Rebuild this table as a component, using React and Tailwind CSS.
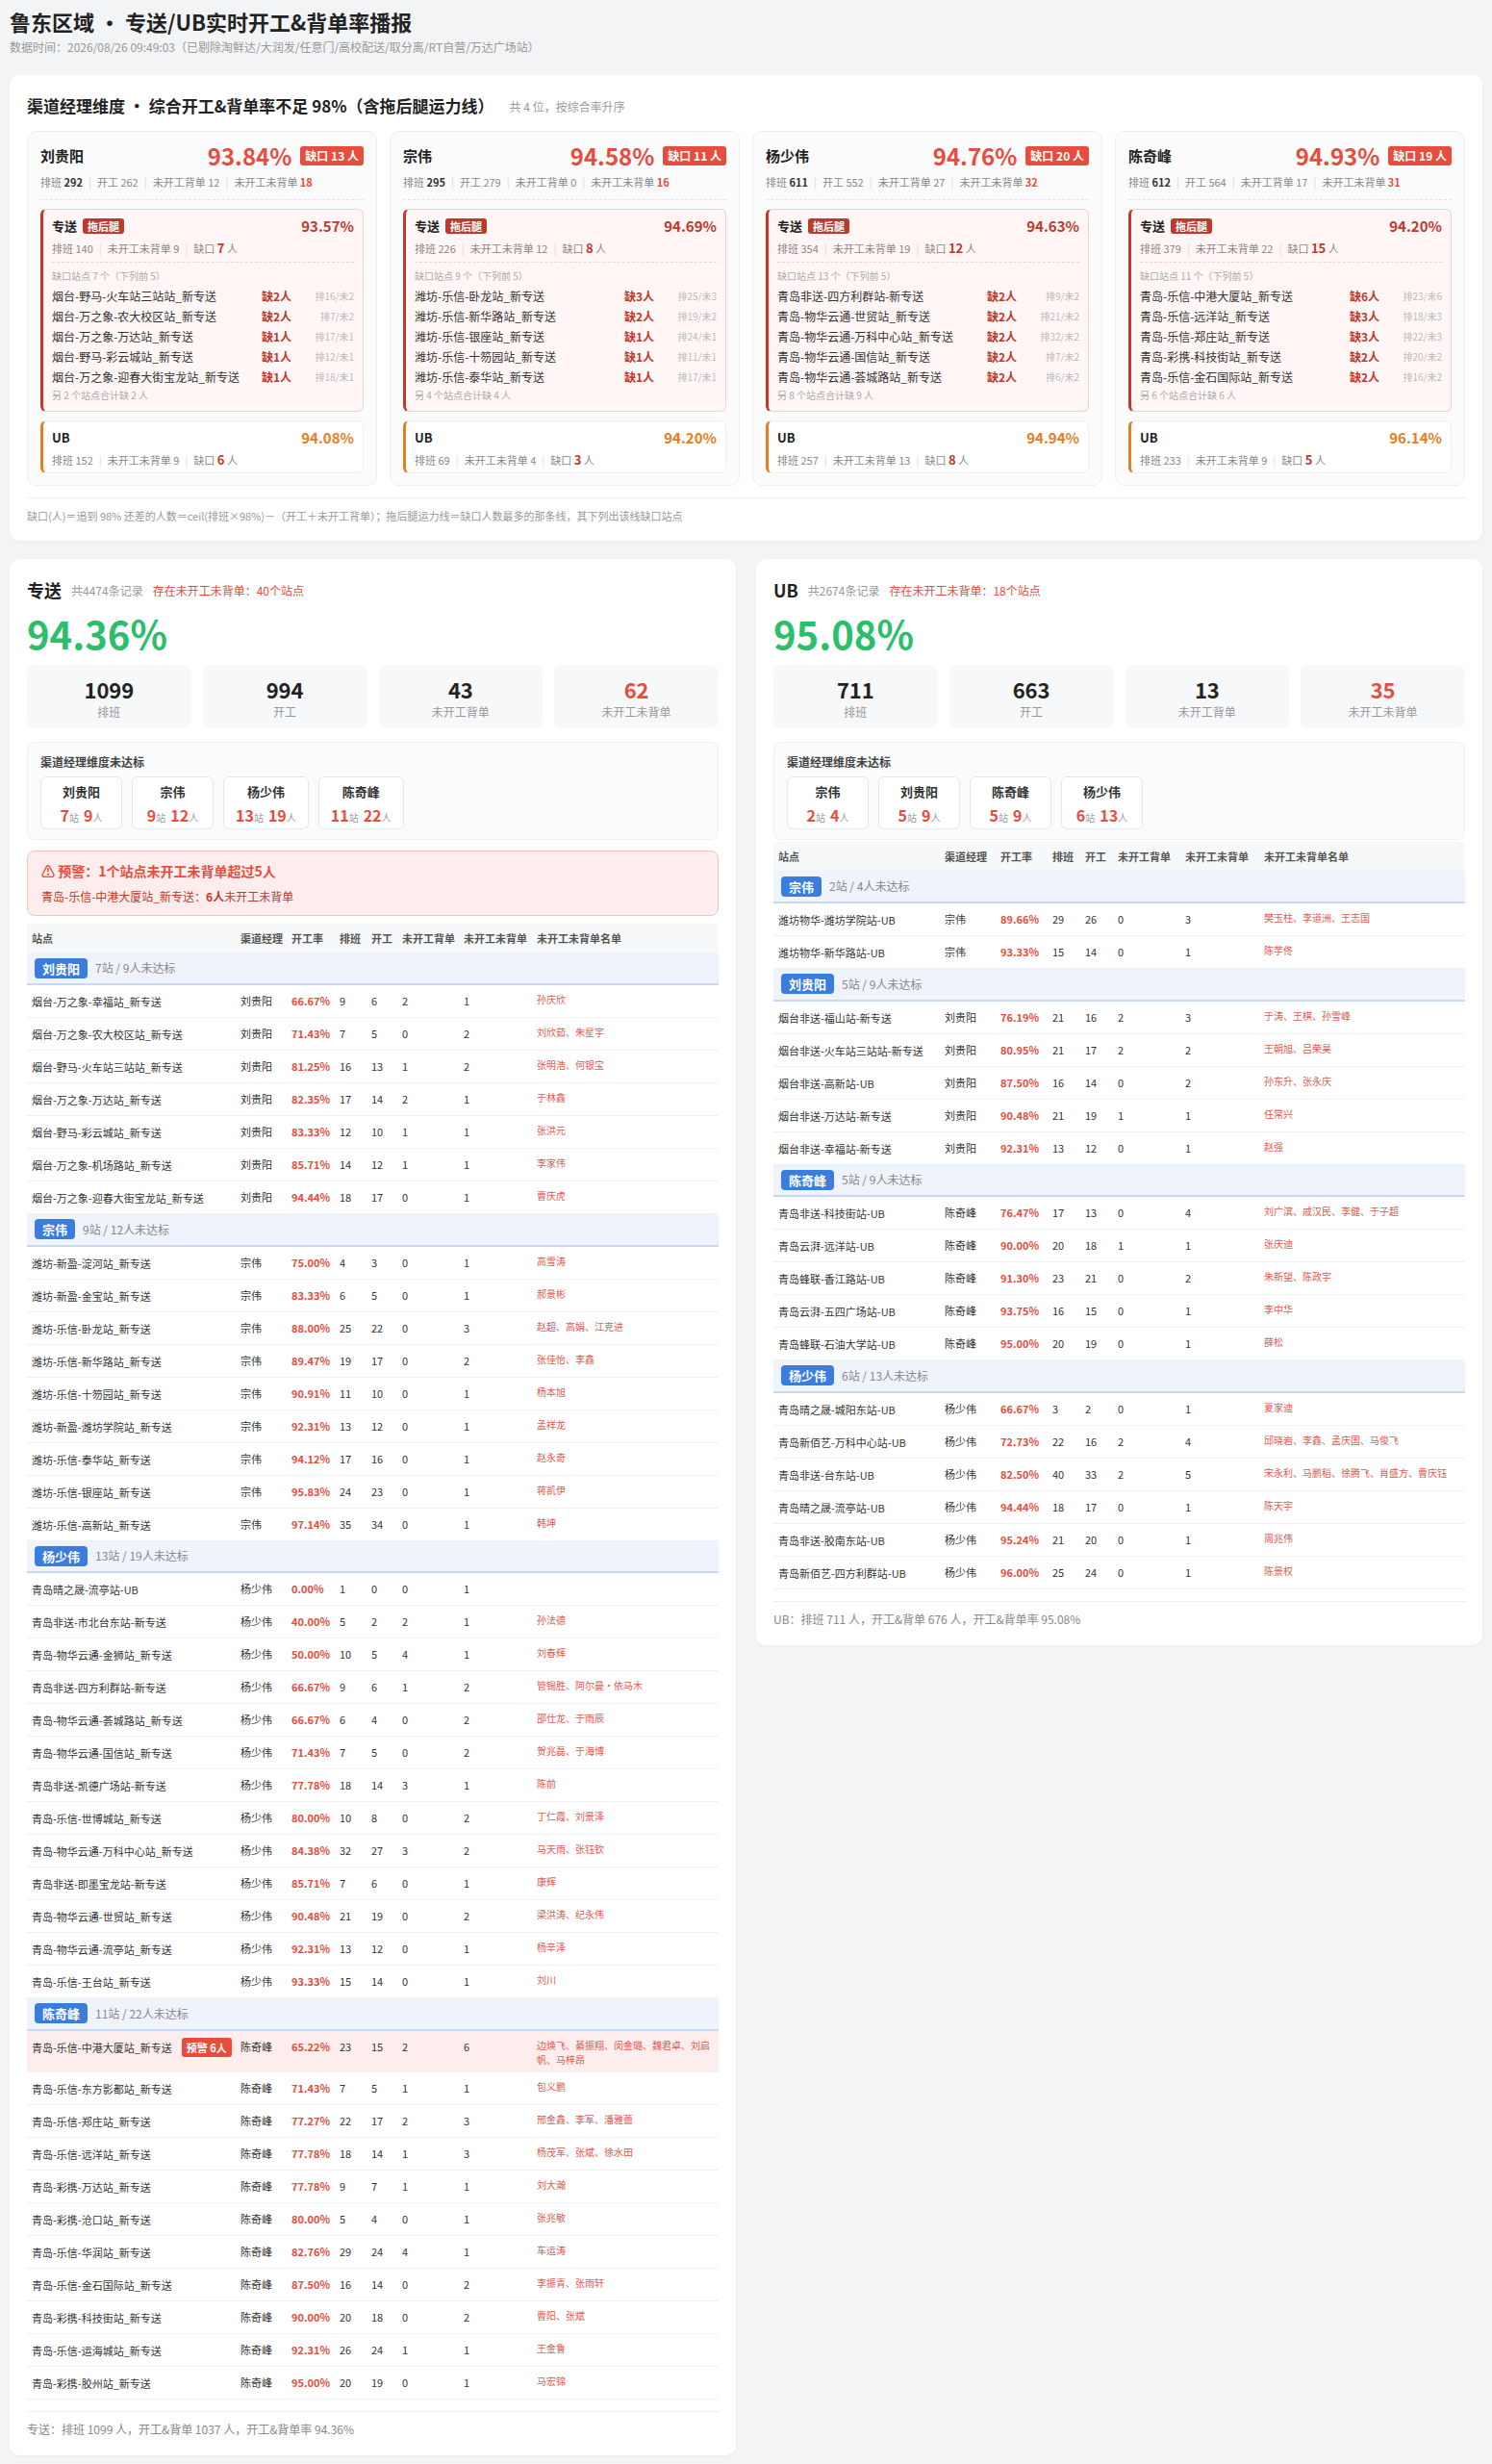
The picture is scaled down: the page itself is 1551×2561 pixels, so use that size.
import React from 'react';

const managerCards = [
  {
    name: '刘贵阳', rate: '93.84%', gap: 13, pb: 292, kg: 262, bd: 12, wb: 18,
    zs: { rate: '93.57%', pb: 140, wb: 9, gap: 7, count: 7, rest: '另 2 个站点合计缺 2 人' },
    list: [
      ['烟台-野马-火车站三站站_新专送', 2, 16, 2],
      ['烟台-万之象-农大校区站_新专送', 2, 7, 2],
      ['烟台-万之象-万达站_新专送', 1, 17, 1],
      ['烟台-野马-彩云城站_新专送', 1, 12, 1],
      ['烟台-万之象-迎春大街宝龙站_新专送', 1, 18, 1],
    ],
    ub: { rate: '94.08%', pb: 152, wb: 9, gap: 6 },
  },
  {
    name: '宗伟', rate: '94.58%', gap: 11, pb: 295, kg: 279, bd: 0, wb: 16,
    zs: { rate: '94.69%', pb: 226, wb: 12, gap: 8, count: 9, rest: '另 4 个站点合计缺 4 人' },
    list: [
      ['潍坊-乐信-卧龙站_新专送', 3, 25, 3],
      ['潍坊-乐信-新华路站_新专送', 2, 19, 2],
      ['潍坊-乐信-银座站_新专送', 1, 24, 1],
      ['潍坊-乐信-十笏园站_新专送', 1, 11, 1],
      ['潍坊-乐信-泰华站_新专送', 1, 17, 1],
    ],
    ub: { rate: '94.20%', pb: 69, wb: 4, gap: 3 },
  },
  {
    name: '杨少伟', rate: '94.76%', gap: 20, pb: 611, kg: 552, bd: 27, wb: 32,
    zs: { rate: '94.63%', pb: 354, wb: 19, gap: 12, count: 13, rest: '另 8 个站点合计缺 9 人' },
    list: [
      ['青岛非送-四方利群站-新专送', 2, 9, 2],
      ['青岛-物华云通-世贸站_新专送', 2, 21, 2],
      ['青岛-物华云通-万科中心站_新专送', 2, 32, 2],
      ['青岛-物华云通-国信站_新专送', 2, 7, 2],
      ['青岛-物华云通-荟城路站_新专送', 2, 6, 2],
    ],
    ub: { rate: '94.94%', pb: 257, wb: 13, gap: 8 },
  },
  {
    name: '陈奇峰', rate: '94.93%', gap: 19, pb: 612, kg: 564, bd: 17, wb: 31,
    zs: { rate: '94.20%', pb: 379, wb: 22, gap: 15, count: 11, rest: '另 6 个站点合计缺 6 人' },
    list: [
      ['青岛-乐信-中港大厦站_新专送', 6, 23, 6],
      ['青岛-乐信-远洋站_新专送', 3, 18, 3],
      ['青岛-乐信-郑庄站_新专送', 3, 22, 3],
      ['青岛-彩携-科技街站_新专送', 2, 20, 2],
      ['青岛-乐信-金石国际站_新专送', 2, 16, 2],
    ],
    ub: { rate: '96.14%', pb: 233, wb: 9, gap: 5 },
  },
];

const zsGroups = [
  {
    m: '刘贵阳', sum: '7站 / 9人未达标', rows: [
      ['烟台-万之象-幸福站_新专送', '66.67%', 9, 6, 2, 1, '孙庆欣'],
      ['烟台-万之象-农大校区站_新专送', '71.43%', 7, 5, 0, 2, '刘欣茹、朱星宇'],
      ['烟台-野马-火车站三站站_新专送', '81.25%', 16, 13, 1, 2, '张明浩、何银宝'],
      ['烟台-万之象-万达站_新专送', '82.35%', 17, 14, 2, 1, '于林鑫'],
      ['烟台-野马-彩云城站_新专送', '83.33%', 12, 10, 1, 1, '张洪元'],
      ['烟台-万之象-机场路站_新专送', '85.71%', 14, 12, 1, 1, '李家伟'],
      ['烟台-万之象-迎春大街宝龙站_新专送', '94.44%', 18, 17, 0, 1, '曹庆虎'],
    ],
  },
  {
    m: '宗伟', sum: '9站 / 12人未达标', rows: [
      ['潍坊-新盈-淀河站_新专送', '75.00%', 4, 3, 0, 1, '高雪涛'],
      ['潍坊-新盈-金宝站_新专送', '83.33%', 6, 5, 0, 1, '郝景彬'],
      ['潍坊-乐信-卧龙站_新专送', '88.00%', 25, 22, 0, 3, '赵超、高娟、江克进'],
      ['潍坊-乐信-新华路站_新专送', '89.47%', 19, 17, 0, 2, '张佳怡、李鑫'],
      ['潍坊-乐信-十笏园站_新专送', '90.91%', 11, 10, 0, 1, '杨本旭'],
      ['潍坊-新盈-潍坊学院站_新专送', '92.31%', 13, 12, 0, 1, '孟祥龙'],
      ['潍坊-乐信-泰华站_新专送', '94.12%', 17, 16, 0, 1, '赵永奇'],
      ['潍坊-乐信-银座站_新专送', '95.83%', 24, 23, 0, 1, '蒋凯伊'],
      ['潍坊-乐信-高新站_新专送', '97.14%', 35, 34, 0, 1, '韩坤'],
    ],
  },
  {
    m: '杨少伟', sum: '13站 / 19人未达标', rows: [
      ['青岛晴之晟-流亭站-UB', '0.00%', 1, 0, 0, 1, ''],
      ['青岛非送-市北台东站-新专送', '40.00%', 5, 2, 2, 1, '孙法德'],
      ['青岛-物华云通-金狮站_新专送', '50.00%', 10, 5, 4, 1, '刘春辉'],
      ['青岛非送-四方利群站-新专送', '66.67%', 9, 6, 1, 2, '管锡胜、阿尔曼·依马木'],
      ['青岛-物华云通-荟城路站_新专送', '66.67%', 6, 4, 0, 2, '邵仕龙、于雨辰'],
      ['青岛-物华云通-国信站_新专送', '71.43%', 7, 5, 0, 2, '贺兆磊、于海博'],
      ['青岛非送-凯德广场站-新专送', '77.78%', 18, 14, 3, 1, '陈前'],
      ['青岛-乐信-世博城站_新专送', '80.00%', 10, 8, 0, 2, '丁仁霞、刘景泽'],
      ['青岛-物华云通-万科中心站_新专送', '84.38%', 32, 27, 3, 2, '马天雨、张钰钦'],
      ['青岛非送-即墨宝龙站-新专送', '85.71%', 7, 6, 0, 1, '康辉'],
      ['青岛-物华云通-世贸站_新专送', '90.48%', 21, 19, 0, 2, '梁洪涛、纪永伟'],
      ['青岛-物华云通-流亭站_新专送', '92.31%', 13, 12, 0, 1, '杨辛泽'],
      ['青岛-乐信-王台站_新专送', '93.33%', 15, 14, 0, 1, '刘川'],
    ],
  },
  {
    m: '陈奇峰', sum: '11站 / 22人未达标', rows: [
      ['青岛-乐信-中港大厦站_新专送', '65.22%', 23, 15, 2, 6, '边焕飞、綦振翔、闵金璐、魏君卓、刘启帆、马梓昂', 6],
      ['青岛-乐信-东方影都站_新专送', '71.43%', 7, 5, 1, 1, '包义鹏'],
      ['青岛-乐信-郑庄站_新专送', '77.27%', 22, 17, 2, 3, '邢金鑫、李军、潘雅蕾'],
      ['青岛-乐信-远洋站_新专送', '77.78%', 18, 14, 1, 3, '杨茂军、张斌、徐水田'],
      ['青岛-彩携-万达站_新专送', '77.78%', 9, 7, 1, 1, '刘大瀚'],
      ['青岛-彩携-沧口站_新专送', '80.00%', 5, 4, 0, 1, '张兆敏'],
      ['青岛-乐信-华润站_新专送', '82.76%', 29, 24, 4, 1, '车运涛'],
      ['青岛-乐信-金石国际站_新专送', '87.50%', 16, 14, 0, 2, '李振青、张雨轩'],
      ['青岛-彩携-科技街站_新专送', '90.00%', 20, 18, 0, 2, '曹阳、张斌'],
      ['青岛-乐信-运海城站_新专送', '92.31%', 26, 24, 1, 1, '王金鲁'],
      ['青岛-彩携-胶州站_新专送', '95.00%', 20, 19, 0, 1, '马宏锦'],
    ],
  },
];

const ubGroups = [
  {
    m: '宗伟', sum: '2站 / 4人未达标', rows: [
      ['潍坊物华-潍坊学院站-UB', '89.66%', 29, 26, 0, 3, '樊玉柱、李道洲、王志国'],
      ['潍坊物华-新华路站-UB', '93.33%', 15, 14, 0, 1, '陈芋佟'],
    ],
  },
  {
    m: '刘贵阳', sum: '5站 / 9人未达标', rows: [
      ['烟台非送-福山站-新专送', '76.19%', 21, 16, 2, 3, '于涛、王棋、孙雪峰'],
      ['烟台非送-火车站三站站-新专送', '80.95%', 21, 17, 2, 2, '王朝旭、吕荣昊'],
      ['烟台非送-高新站-UB', '87.50%', 16, 14, 0, 2, '孙东升、张永庆'],
      ['烟台非送-万达站-新专送', '90.48%', 21, 19, 1, 1, '任常兴'],
      ['烟台非送-幸福站-新专送', '92.31%', 13, 12, 0, 1, '赵强'],
    ],
  },
  {
    m: '陈奇峰', sum: '5站 / 9人未达标', rows: [
      ['青岛非送-科技街站-UB', '76.47%', 17, 13, 0, 4, '刘广滨、戚汉民、李健、于子超'],
      ['青岛云湃-远洋站-UB', '90.00%', 20, 18, 1, 1, '张庆迪'],
      ['青岛蜂联-香江路站-UB', '91.30%', 23, 21, 0, 2, '朱新望、陈政宇'],
      ['青岛云湃-五四广场站-UB', '93.75%', 16, 15, 0, 1, '李中华'],
      ['青岛蜂联-石油大学站-UB', '95.00%', 20, 19, 0, 1, '薛松'],
    ],
  },
  {
    m: '杨少伟', sum: '6站 / 13人未达标', rows: [
      ['青岛晴之晟-城阳东站-UB', '66.67%', 3, 2, 0, 1, '夏家迪'],
      ['青岛新佰艺-万科中心站-UB', '72.73%', 22, 16, 2, 4, '邱晓岩、李鑫、孟庆国、马俊飞'],
      ['青岛非送-台东站-UB', '82.50%', 40, 33, 2, 5, '宋永利、马鹏稻、徐腾飞、肖盛方、曹庆钰'],
      ['青岛晴之晟-流亭站-UB', '94.44%', 18, 17, 0, 1, '陈天宇'],
      ['青岛非送-胶南东站-UB', '95.24%', 21, 20, 0, 1, '周兆伟'],
      ['青岛新佰艺-四方利群站-UB', '96.00%', 25, 24, 0, 1, '陈景权'],
    ],
  },
];

const ZS_COLS = ['w-[217px]', 'w-[53px]', 'w-[50px]', 'w-[33px]', 'w-[32px]', 'w-[64px]', 'w-[76px]', 'w-auto'];
const UB_COLS = ['w-[173px]', 'w-[58px]', 'w-[54px]', 'w-[34px]', 'w-[34px]', 'w-[70px]', 'w-[82px]', 'w-auto'];
const HEADERS = ['站点', '渠道经理', '开工率', '排班', '开工', '未开工背单', '未开工未背单', '未开工未背单名单'];

const Sep = () => <span className="mx-[6px] text-[#d9d9d9]">|</span>;

const ManagerCard = ({ c }) => (
  <div className="rounded-[10px] border border-[#eceef2] bg-[#fbfbfc] px-[13px] pt-[11px] pb-[12px]">
    <div className="flex h-[28px] items-center justify-between">
      <div className="text-[15px] font-bold leading-[28px] text-[#222]">{c.name}</div>
      <div className="flex items-center gap-[9px]">
        <span className="text-[24px] font-bold leading-[28px] text-[#e74c3c]">{c.rate}</span>
        <span className="whitespace-nowrap rounded-[3px] bg-[#e74c3c] px-[5px] text-[12px] font-bold leading-[20px] text-white">
          缺口 {c.gap} 人
        </span>
      </div>
    </div>
    <div className="mt-[4px] h-[28px] whitespace-nowrap border-b border-dashed border-[#e2e4e8] text-[11px] leading-[18px] text-[#888]">
      排班 <b className="text-[#333]">{c.pb}</b>
      <Sep />开工 {c.kg}
      <Sep />未开工背单 {c.bd}
      <Sep />未开工未背单 <b className="text-[#e74c3c]">{c.wb}</b>
    </div>

    {/* 专送 - 拖后腿 */}
    <div className="mt-[9px] rounded-[6px] border border-[#f5d0cc] border-l-[3px] border-l-[#c0392b] bg-[#fff6f5] pl-[9px] pr-[9px] pt-[7px] pb-[8px]">
      <div className="flex h-[20px] items-center justify-between">
        <div className="flex items-center">
          <span className="text-[13px] font-bold leading-[20px] text-[#222]">专送</span>
          <span className="ml-[6px] rounded-[3px] bg-[#c0392b] px-[5px] text-[11px] font-bold leading-[16px] text-white">
            拖后腿
          </span>
        </div>
        <span className="text-[15px] font-bold leading-[20px] text-[#c0392b]">{c.zs.rate}</span>
      </div>
      <div className="mt-[4px] h-[24px] whitespace-nowrap border-b border-dashed border-[#f0d6d3] text-[11px] leading-[18px] text-[#888]">
        排班 {c.zs.pb}
        <Sep />未开工未背单 {c.zs.wb}
        <Sep />缺口 <b className="text-[13px] leading-none text-[#c0392b]">{c.zs.gap}</b> 人
      </div>
      <div className="mt-[6px] h-[16px] text-[10px] leading-[16px] text-[#aaa]">缺口站点 {c.zs.count} 个（下列前 5）</div>
      <div className="mt-[2px]">
        {c.list.map((s) => (
          <div key={s[0]} className="flex h-[21px] items-center whitespace-nowrap text-[12px] leading-[21px]">
            <span className="min-w-0 flex-1 truncate text-[#333]">{s[0]}</span>
            <span className="w-[52px] shrink-0 font-bold text-[#c0392b]">缺{s[1]}人</span>
            <span className="w-[44px] shrink-0 text-right text-[10px] text-[#bbb]">
              排{s[2]}/未{s[3]}
            </span>
          </div>
        ))}
      </div>
      <div className="mt-[1px] h-[16px] text-[10px] leading-[16px] text-[#aaa]">{c.zs.rest}</div>
    </div>

    {/* UB */}
    <div className="mt-[9px] rounded-[6px] border border-[#eceef1] border-l-[3px] border-l-[#e67e22] bg-white pl-[9px] pr-[9px] pt-[7px] pb-[4px]">
      <div className="flex h-[20px] items-center justify-between">
        <span className="text-[13px] font-bold leading-[20px] text-[#222]">UB</span>
        <span className="text-[15px] font-bold leading-[20px] text-[#e67e22]">{c.ub.rate}</span>
      </div>
      <div className="mt-[4px] h-[18px] whitespace-nowrap text-[11px] leading-[18px] text-[#888]">
        排班 {c.ub.pb}
        <Sep />未开工未背单 {c.ub.wb}
        <Sep />缺口 <b className="text-[13px] leading-none text-[#c0392b]">{c.ub.gap}</b> 人
      </div>
    </div>
  </div>
);

const StatBox = ({ value, label, red }) => (
  <div className="h-[66px] rounded-[8px] bg-[#f7f8fa] pt-[11px] text-center">
    <div className={`text-[22px] font-bold leading-[28px] ${red ? 'text-[#e74c3c]' : 'text-[#222]'}`}>{value}</div>
    <div className="mt-[1px] text-[12px] leading-[18px] text-[#999]">{label}</div>
  </div>
);

const MiniCard = ({ name, st, ppl }) => (
  <div className="h-[55px] min-w-[85px] rounded-[6px] border border-[#e5e7eb] bg-white px-[12px] pt-[5px] text-center">
    <div className="text-[13px] font-semibold leading-[20px] text-[#333]">{name}</div>
    <div className="mt-[3px] h-[22px] whitespace-nowrap text-[16px] leading-[22px]">
      <span className="font-bold text-[#e74c3c]">{st}</span>
      <span className="text-[10px] leading-none text-[#999]">站</span>
      <span className="ml-[5px] font-bold text-[#e74c3c]">{ppl}</span>
      <span className="text-[10px] leading-none text-[#999]">人</span>
    </div>
  </div>
);

const DataTable = ({ groups, cols }) => (
  <table className="w-full table-fixed border-collapse">
    <colgroup>
      {cols.map((c, i) => (
        <col key={i} className={c} />
      ))}
    </colgroup>
    <thead>
      <tr className="bg-[#f7f8fa]">
        {HEADERS.map((h) => (
          <th key={h} className="h-[30px] whitespace-nowrap px-[5px] py-0 text-left text-[11px] font-bold leading-[18px] text-[#555]">
            {h}
          </th>
        ))}
      </tr>
    </thead>
    <tbody>
      {groups.map((g) => (
        <React.Fragment key={g.m}>
          <tr className="border-b-2 border-[#c9d8f2] bg-[#eef3fc]">
            <td colSpan={8} className="h-[33px] px-[8px] py-0">
              <div className="flex items-center">
                <span className="rounded-[4px] bg-[#3b7ddd] px-[8px] text-[13px] font-bold leading-[21px] text-white">{g.m}</span>
                <span className="ml-[8px] text-[12px] leading-[18px] text-[#888]">{g.sum}</span>
              </div>
            </td>
          </tr>
          {g.rows.map((r) => (
            <tr key={r[0]} className={`border-b border-[#f0f1f3] text-[11px] leading-[17px] text-[#333] ${r[7] ? 'bg-[#fdeeed]' : 'bg-white'}`}>
              <td className="h-[33px] whitespace-nowrap px-[5px] pt-[9px] pb-[7px] align-top">
                {r[0]}
                {r[7] && (
                  <span className="ml-[10px] rounded-[3px] bg-[#e74c3c] px-[5px] py-[2px] text-[11px] font-bold leading-none text-white">
                    预警 {r[7]}人
                  </span>
                )}
              </td>
              <td className="px-[5px] py-[8px] align-top">{g.m}</td>
              <td className="px-[5px] py-[8px] align-top font-semibold text-[#e74c3c]">{r[1]}</td>
              <td className="px-[5px] py-[8px] align-top">{r[2]}</td>
              <td className="px-[5px] py-[8px] align-top">{r[3]}</td>
              <td className="px-[5px] py-[8px] align-top">{r[4]}</td>
              <td className="px-[5px] py-[8px] align-top">{r[5]}</td>
              <td className="px-[5px] pt-[7px] pb-[5px] align-top text-[10px] leading-[15px] text-[#e05a4f]">{r[6]}</td>
            </tr>
          ))}
        </React.Fragment>
      ))}
    </tbody>
  </table>
);

const Section = ({ title, total, count, rate, stats, managers, warning, groups, cols, footer }) => (
  <div className="rounded-[10px] bg-white p-[18px] shadow-[0_1px_3px_rgba(0,0,0,0.04)]">
    <div className="flex h-[28px] items-center">
      <span className="text-[18px] font-bold leading-[28px] text-[#222]">{title}</span>
      <span className="ml-[10px] pt-[2px] text-[12px] leading-none text-[#999]">共{total}条记录</span>
      <span className="ml-[10px] pt-[2px] text-[12px] leading-none text-[#e74c3c]">存在未开工未背单：{count}个站点</span>
    </div>
    <div className="mt-[7px] h-[48px] text-[40px] font-bold leading-[48px] text-[#2dbe6c]">{rate}</div>
    <div className="mt-[9px] grid grid-cols-4 gap-[12px]">
      <StatBox value={stats[0]} label="排班" />
      <StatBox value={stats[1]} label="开工" />
      <StatBox value={stats[2]} label="未开工背单" />
      <StatBox value={stats[3]} label="未开工未背单" red />
    </div>
    <div className="mt-[14px] h-[102px] rounded-[8px] border border-[#eef0f3] bg-[#fafbfc] px-[13px] pt-[11px]">
      <div className="text-[12px] font-semibold leading-[18px] text-[#444]">渠道经理维度未达标</div>
      <div className="mt-[6px] flex gap-[10px]">
        {managers.map((m) => (
          <MiniCard key={m[0]} name={m[0]} st={m[1]} ppl={m[2]} />
        ))}
      </div>
    </div>
    {warning ? (
      <>
        <div className="mt-[11px] h-[68px] rounded-[8px] border border-[#f5c4be] bg-[#fdeeed] px-[14px] pt-[10px]">
          <div className="h-[20px] text-[14px] font-bold leading-[20px] text-[#e74c3c]">⚠ 预警：1个站点未开工未背单超过5人</div>
          <div className="mt-[8px] h-[18px] text-[12px] leading-[18px] text-[#c0392b]">
            青岛-乐信-中港大厦站_新专送：<b>6人</b>未开工未背单
          </div>
        </div>
        <div className="mt-[8px]">
          <DataTable groups={groups} cols={cols} />
        </div>
      </>
    ) : (
      <div className="mt-[2px]">
        <DataTable groups={groups} cols={cols} />
      </div>
    )}
    <div className="mt-[12px] border-t border-[#eceef1] pt-[9px] text-[12px] leading-[18px] text-[#888]">{footer}</div>
  </div>
);

export default function App() {
  return (
    <div className="min-h-screen w-full bg-[#f3f4f6] px-[10px] pt-[7px] pb-[7px] font-['Noto_Sans_CJK_SC','Noto_Sans',sans-serif] text-[#333]">
      <div className="h-[30px] text-[22px] font-bold leading-[30px] text-[#222]">鲁东区域 • 专送/UB实时开工&amp;背单率播报</div>
      <div className="mt-[3px] h-[18px] text-[12px] leading-[18px] text-[#999]">
        数据时间：2026/08/26 09:49:03（已剔除淘鲜达/大润发/任意门/高校配送/取分离/RT自营/万达广场站）
      </div>

      <div className="mt-[20px] rounded-[10px] bg-white p-[18px] shadow-[0_1px_3px_rgba(0,0,0,0.04)]">
        <div className="flex h-[28px] items-center">
          <span className="text-[17px] font-bold leading-[28px] text-[#222]">渠道经理维度 • 综合开工&amp;背单率不足 98%（含拖后腿运力线）</span>
          <span className="ml-[16px] pt-[2px] text-[12px] leading-none text-[#999]">共 4 位，按综合率升序</span>
        </div>
        <div className="mt-[12px] grid grid-cols-4 gap-[13px]">
          {managerCards.map((c) => (
            <ManagerCard key={c.name} c={c} />
          ))}
        </div>
        <div className="mt-[12px] border-t border-[#eceef1] pt-[10px] text-[11px] leading-[16px] text-[#999]">
          缺口(人)＝追到 98% 还差的人数＝ceil(排班×98%)－（开工＋未开工背单）；拖后腿运力线＝缺口人数最多的那条线，其下列出该线缺口站点
        </div>
      </div>

      <div className="mt-[19px] grid grid-cols-2 items-start gap-[21px]">
        <Section
          title="专送"
          total={4474}
          count={40}
          rate="94.36%"
          stats={[1099, 994, 43, 62]}
          managers={[['刘贵阳', 7, 9], ['宗伟', 9, 12], ['杨少伟', 13, 19], ['陈奇峰', 11, 22]]}
          warning
          groups={zsGroups}
          cols={ZS_COLS}
          footer="专送：排班 1099 人，开工&背单 1037 人，开工&背单率 94.36%"
        />
        <Section
          title="UB"
          total={2674}
          count={18}
          rate="95.08%"
          stats={[711, 663, 13, 35]}
          managers={[['宗伟', 2, 4], ['刘贵阳', 5, 9], ['陈奇峰', 5, 9], ['杨少伟', 6, 13]]}
          groups={ubGroups}
          cols={UB_COLS}
          footer="UB：排班 711 人，开工&背单 676 人，开工&背单率 95.08%"
        />
      </div>
    </div>
  );
}
